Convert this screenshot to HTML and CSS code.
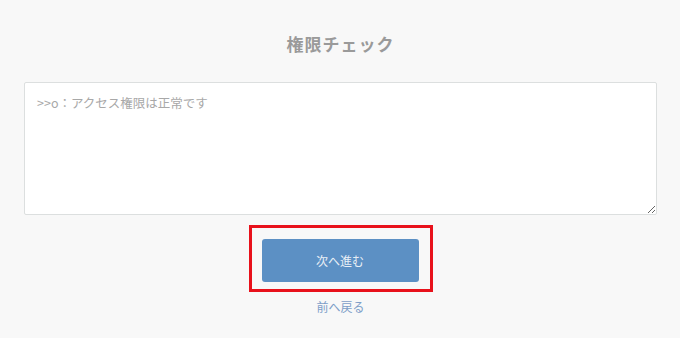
FILE: index.html
```html
<!DOCTYPE html>
<html lang="ja">
<head>
<meta charset="utf-8">
<link rel="stylesheet" href="styles.css">
</head>
<body>
<main class="page">
  <h1 class="title">権限チェック</h1>
  <textarea class="log" readonly>&gt;&gt;o：アクセス権限は正常です</textarea>
  <div class="highlight">
    <button class="next" type="button">次へ進む</button>
  </div>
  <a class="back" href="#">前へ戻る</a>
</main>
</body>
</html>
```

FILE: styles.css
```css
html, body {
  margin: 0;
  padding: 0;
  background: #f8f8f8;
}
body {
  font-family: "Noto Sans CJK JP", "Noto Sans", sans-serif;
}
.page {
  display: flex;
  flex-direction: column;
  align-items: center;
  padding: 32px 23px 0 24px;
}
.title {
  margin: 0;
  font-size: 17px;
  line-height: 24px;
  font-weight: bold;
  color: #9a9a9a;
  letter-spacing: 1px;
}
.log {
  box-sizing: border-box;
  margin: 26px 0 0;
  width: 100%;
  height: 133px;
  border: 1px solid #dcdfdf;
  border-radius: 2px;
  background: #fff;
  padding: 11px 11px 9px 12px;
  font-family: "Noto Sans CJK JP", "Noto Sans", sans-serif;
  font-size: 12.5px;
  line-height: 1.5;
  color: #a8a8a8;
  outline: none;
}
.highlight {
  margin-top: 10px;
  border: 3px solid #e8111b;
  padding: 11px 11px 7px 10px;
  display: flex;
}
.next {
  width: 157px;
  height: 43px;
  border: none;
  border-radius: 3px;
  background: #5c90c4;
  color: #e9eff6;
  font-family: "Noto Sans CJK JP", "Noto Sans", sans-serif;
  font-size: 12px;
  cursor: pointer;
}
.back {
  margin-top: 6px;
  font-size: 12px;
  line-height: 18px;
  color: #7d9ec8;
  text-decoration: none;
}
```
